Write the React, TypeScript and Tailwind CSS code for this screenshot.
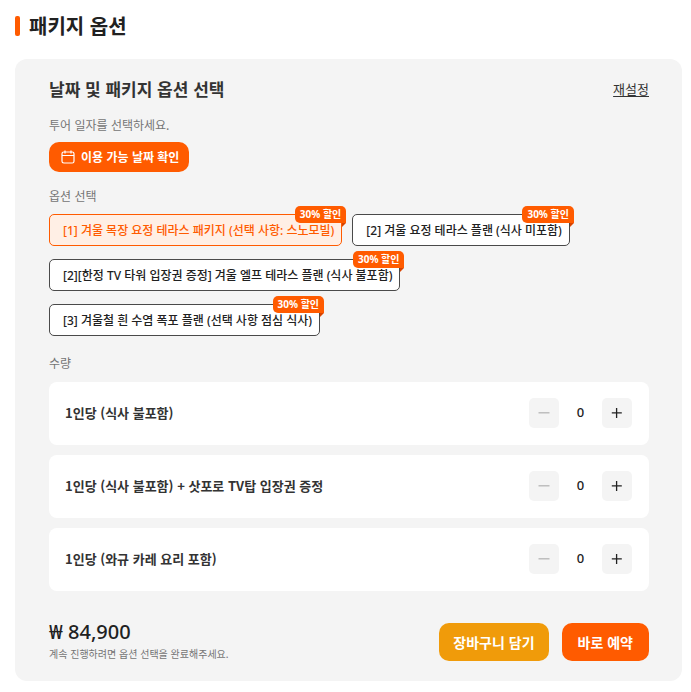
import { useState } from "react";

const options = [
  "[1] 겨울 목장 요정 테라스 패키지 (선택 사항: 스노모빌)",
  "[2] 겨울 요정 테라스 플랜 (식사 미포함)",
  "[2][한정 TV 타워 입장권 증정] 겨울 엘프 테라스 플랜 (식사 불포함)",
  "[3] 겨울철 흰 수염 폭포 플랜 (선택 사항 점심 식사)",
];

const tickets = [
  "1인당 (식사 불포함)",
  "1인당 (식사 불포함) + 삿포로 TV탑 입장권 증정",
  "1인당 (와규 카레 요리 포함)",
];

function CalendarIcon() {
  return (
    <svg width="14" height="14" viewBox="0 0 14 14" fill="none" stroke="currentColor" strokeWidth="1.2" aria-hidden="true">
      <rect x="1" y="2" width="12" height="11" rx="1.8" />
      <path d="M1 5.5h12M4 .5v3M10 .5v3" />
    </svg>
  );
}

export default function App() {
  const [selected, setSelected] = useState(0);
  const [counts, setCounts] = useState([0, 0, 0]);

  const changeCount = (idx: number, step: number) => {
    setCounts(counts.map((c, i) => (i === idx ? Math.max(0, c + step) : c)));
  };

  const reset = () => {
    setSelected(0);
    setCounts([0, 0, 0]);
  };

  return (
    <main lang="ko" className="bg-white pt-3 pr-[9px] pb-3 pl-[15px] font-['Noto_Sans_CJK_KR','Noto_Sans',sans-serif] text-[#212121]">
      <div className="flex items-center gap-[9px]">
        <span className="h-5 w-[5px] rounded-xs bg-[#ff5b00]" />
        <h1 className="text-xl leading-7 font-semibold">패키지 옵션</h1>
      </div>

      <section className="mt-[19px] rounded-xl bg-[#f4f4f4] pt-[18px] pr-[33px] pb-[19px] pl-[34px]">
        <div className="flex items-center justify-between">
          <h2 className="text-[17px] leading-6 font-semibold text-[#333333]">날짜 및 패키지 옵션 선택</h2>
          <button type="button" onClick={reset} className="text-[13px] leading-6 text-[#333333] underline underline-offset-2">
            재설정
          </button>
        </div>

        <p className="mt-4 text-xs leading-4 text-[#757575]">투어 일자를 선택하세요.</p>
        <button type="button" className="mt-[9px] flex h-[30px] items-center gap-[6px] rounded-[10px] bg-[#ff5b00] pr-[10px] pl-3 text-xs font-bold text-white">
          <CalendarIcon />
          이용 가능 날짜 확인
        </button>

        {/* Package options */}
        <p className="mt-4 text-xs leading-4 text-[#757575]">옵션 선택</p>
        <div className="mt-[10px] flex flex-wrap gap-x-[10px] gap-y-[13px] font-['Noto_Sans','Noto_Sans_CJK_KR',sans-serif]">
          {options.map((name, idx) => (
            <button
              key={name}
              type="button"
              aria-pressed={selected === idx}
              onClick={() => setSelected(idx)}
              className={`relative h-8 rounded-[5px] border pt-px pr-[7px] pl-[13px] text-xs font-medium ${
                selected === idx ? "border-[#ff5b00] bg-[#ffefe5] text-[#ff5b00]" : "border-[#4a4a4a] bg-white text-[#212121]"
              }`}
            >
              {name}
              <span className="absolute -top-[9px] -right-[5px] flex h-[17px] items-center rounded-t-[5px] rounded-bl-[5px] bg-[#ff5b00] px-[5px] text-[10px] font-bold text-white">
                30% 할인
                <svg className="absolute top-full right-0" width="4" height="4" viewBox="0 0 4 4" aria-hidden="true">
                  <path d="M0 0h4L0 4z" fill="#d84300" />
                </svg>
              </span>
            </button>
          ))}
        </div>

        {/* Quantities */}
        <p className="mt-[19px] text-xs leading-4 text-[#757575]">수량</p>
        <div className="mt-[11px] flex flex-col gap-[10px]">
          {tickets.map((name, idx) => (
            <div key={name} className="flex items-center justify-between rounded-lg bg-white pt-4 pr-[17px] pb-[17px] pl-4">
              <span className="text-[13px] font-semibold text-[#333333]">{name}</span>
              <div className="flex items-center font-['Noto_Sans','Noto_Sans_CJK_KR',sans-serif]">
                <button
                  type="button"
                  aria-label={`${name} 빼기`}
                  disabled={counts[idx] === 0}
                  onClick={() => changeCount(idx, -1)}
                  className="flex size-[30px] items-center justify-center rounded-[5px] bg-[#f4f4f4] text-[#212121] disabled:text-[#b5b5b5]"
                >
                  <svg width="12" height="12" viewBox="0 0 12 12" stroke="currentColor" strokeWidth="1.3" aria-hidden="true">
                    <path d="M.5 5.8h11" />
                  </svg>
                </button>
                <span className="w-[43px] text-center text-[13px] font-medium">{counts[idx]}</span>
                <button
                  type="button"
                  aria-label={`${name} 더하기`}
                  onClick={() => changeCount(idx, 1)}
                  className="flex size-[30px] items-center justify-center rounded-[5px] bg-[#f4f4f4] text-[#212121]"
                >
                  <svg width="12" height="12" viewBox="0 0 12 12" stroke="currentColor" strokeWidth="1.3" aria-hidden="true">
                    <path d="M.8 5.8h10M5.6 1v10" />
                  </svg>
                </button>
              </div>
            </div>
          ))}
        </div>

        <div className="mt-[31px] flex items-center justify-between">
          <div>
            <p className="font-['Noto_Sans','Noto_Sans_CJK_KR',sans-serif] text-xl leading-5 font-medium">₩ 84,900</p>
            <p className="mt-1 text-[10px] leading-4 text-[#757575]">계속 진행하려면 옵션 선택을 완료해주세요.</p>
          </div>
          <div className="flex gap-[13px]">
            <button type="button" className="h-[38px] rounded-[10px] bg-[#f09b0a] px-[14px] text-sm font-bold text-white">
              장바구니 담기
            </button>
            <button type="button" className="h-[38px] rounded-[10px] bg-[#ff5b00] px-4 text-sm font-bold text-white">
              바로 예약
            </button>
          </div>
        </div>
      </section>
    </main>
  );
}
